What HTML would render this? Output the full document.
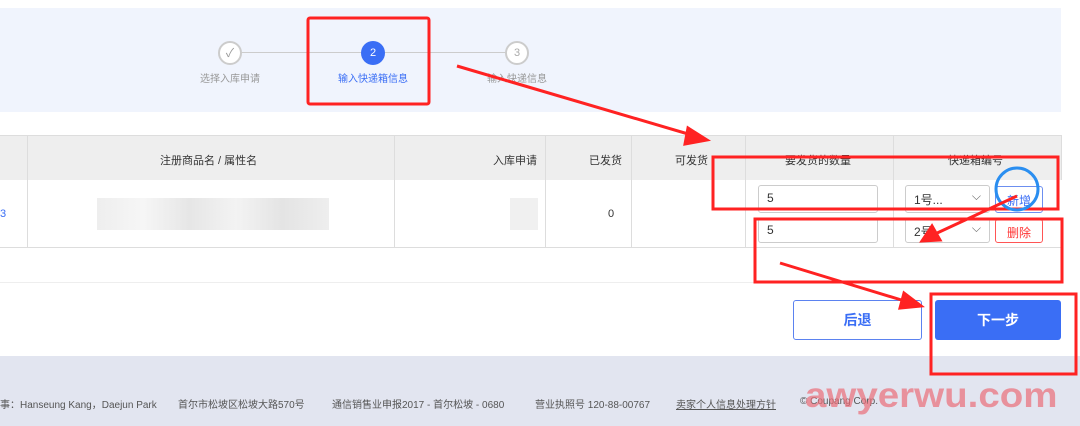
<!DOCTYPE html>
<html><head><meta charset="utf-8"><style>
*{margin:0;padding:0;box-sizing:border-box}
body{width:1080px;height:426px;overflow:hidden;background:#fff;font-family:"Liberation Sans","Noto Sans CJK SC",sans-serif;position:relative}
.abs{position:absolute}
.t{font-size:10px;color:#999;white-space:nowrap}
.h{font-size:11px;color:#333;white-space:nowrap}
.vl{position:absolute;top:135px;width:1px;height:112px;background:#ddd}
.inp{position:absolute;border:1px solid #ccc;border-radius:3px;background:#fff;font-size:12px;color:#333;padding:5px 8px}
.ft{position:absolute;top:396px;font-size:10px;color:#555;white-space:nowrap}
</style></head><body>
<div class="abs" style="left:0;top:8px;width:1061px;height:104px;background:#f0f4fd"></div>
<div class="abs" style="left:230px;top:52px;width:286px;height:1px;background:#ccc"></div>
<div class="abs" style="left:218px;top:41px;width:24px;height:24px;border-radius:50%;border:2px solid #ccc;background:#fff;color:#999;font-size:12px;text-align:center;line-height:20px">✓</div>
<div class="abs" style="left:361px;top:41px;width:24px;height:24px;border-radius:50%;background:#3a6ef5;color:#fff;font-size:11px;text-align:center;line-height:24px">2</div>
<div class="abs" style="left:505px;top:41px;width:24px;height:24px;border-radius:50%;border:2px solid #ccc;background:#fff;color:#aaa;font-size:11px;text-align:center;line-height:20px">3</div>
<div class="abs t" style="left:200px;top:70px">选择入库申请</div>
<div class="abs t" style="left:338px;top:70px;color:#3a6ef5">输入快递箱信息</div>
<div class="abs t" style="left:487px;top:70px">输入快递信息</div>

<div class="abs" style="left:0;top:135px;width:1061px;height:45px;background:#eee;border-top:1px solid #ddd"></div>
<div class="abs" style="left:0;top:247px;width:1061px;height:1px;background:#ddd"></div>
<div class="abs" style="left:0;top:282px;width:1061px;height:1px;background:#eee"></div>
<div class="vl" style="left:27px"></div><div class="vl" style="left:394px"></div><div class="vl" style="left:545px"></div><div class="vl" style="left:631px"></div><div class="vl" style="left:745px"></div><div class="vl" style="left:893px"></div>
<div class="vl" style="left:1061px;height:45px"></div>
<div class="abs h" style="left:160px;top:152px">注册商品名 / 属性名</div>
<div class="abs h" style="left:493px;top:152px">入库申请</div>
<div class="abs h" style="left:589px;top:152px">已发货</div>
<div class="abs h" style="left:675px;top:152px">可发货</div>
<div class="abs h" style="left:785px;top:152px">要发货的数量</div>
<div class="abs h" style="left:948px;top:152px">快递箱编号</div>
<div class="abs" style="left:0;top:208px;font-size:11px;color:#3a6ef5">3</div>
<div class="abs" style="left:97px;top:198px;width:232px;height:32px;background:linear-gradient(90deg,#eee,#f6f6f6,#e6e6e6,#f3f3f3,#e4e4e4,#eee)"></div>
<div class="abs" style="left:510px;top:198px;width:28px;height:32px;background:#f0f0f0"></div>
<div class="abs" style="left:608px;top:208px;font-size:11px;color:#333">0</div>
<div class="inp" style="left:758px;top:185px;width:120px;height:28px">5</div>
<div class="inp" style="left:758px;top:218px;width:120px;height:25px;padding-top:4px">5</div>
<div class="inp" style="left:905px;top:185px;width:85px;height:28px">1号...<span style="position:absolute;right:8px;top:3px;color:#666">⌵</span></div>
<div class="inp" style="left:905px;top:218px;width:85px;height:25px;padding-top:4px">2号<span style="position:absolute;right:8px;top:2px;color:#666">⌵</span></div>
<div class="inp" style="left:995px;top:186px;width:48px;height:27px;border-color:#6c8ff0;color:#3a6ef5;text-align:center;padding:5px 0">新增</div>
<div class="inp" style="left:995px;top:219px;width:48px;height:24px;border-color:#f55;color:#f33;text-align:center;padding:4px 0">删除</div>

<div class="abs" style="left:793px;top:300px;width:129px;height:40px;border:1px solid #5b82f0;border-radius:3px;color:#3a6ef5;font-size:14px;font-weight:bold;text-align:center;line-height:38px">后退</div>
<div class="abs" style="left:935px;top:300px;width:126px;height:40px;background:#3a6ef5;border-radius:3px;color:#fff;font-size:14px;font-weight:bold;text-align:center;line-height:40px">下一步</div>

<div class="abs" style="left:0;top:356px;width:1080px;height:70px;background:#e2e5f0"></div>
<div class="ft" style="left:0">事：Hanseung Kang，Daejun Park</div>
<div class="ft" style="left:178px">首尔市松坡区松坡大路570号</div>
<div class="ft" style="left:332px">通信销售业申报2017 - 首尔松坡 - 0680</div>
<div class="ft" style="left:535px">营业执照号 120-88-00767</div>
<div class="ft" style="left:676px;text-decoration:underline">卖家个人信息处理方针</div>
<div class="ft" style="left:800px">© Coupang Corp.</div>
<div class="abs" style="left:805px;top:376px;font-size:35px;line-height:40px;font-weight:bold;color:rgba(235,110,120,0.7);transform:scaleX(1.1);transform-origin:left">awyerwu.com</div>

<svg class="abs" style="left:0;top:0" width="1080" height="426">
<g fill="none" stroke="#f22" stroke-width="3">
<rect x="308" y="18" width="121" height="86" rx="2"/>
<rect x="713" y="157" width="345" height="52"/>
<rect x="755" y="219" width="307" height="63"/>
<rect x="931" y="294" width="145" height="80"/>
</g>
<circle cx="1017" cy="189" r="21" fill="none" stroke="#2a8ef0" stroke-width="3"/>
<g stroke="#f22" stroke-width="3" fill="#f22">
<line x1="457" y1="66" x2="695" y2="136"/><polygon points="707,140 688,128 685,144"/>
<line x1="1017" y1="196" x2="935" y2="234"/><polygon points="922,241 932,226 940,240"/>
<line x1="780" y1="263" x2="908" y2="302"/><polygon points="921,306 904,293 900,308"/>
</g>
</svg>
</body></html>
